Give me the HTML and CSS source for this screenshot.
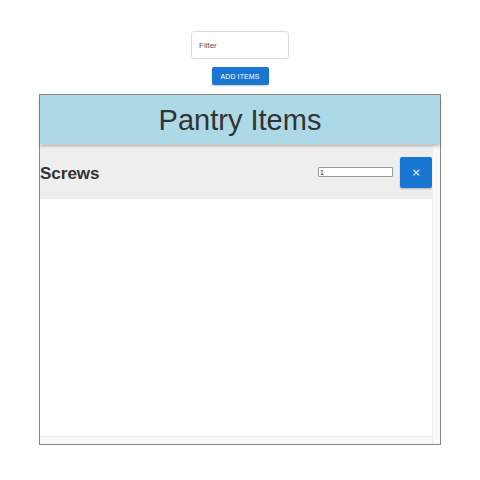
FILE: index.html
```html
<!DOCTYPE html>
<html lang="en">
<head>
  <meta charset="UTF-8">
  <title>Pantry</title>
  <link rel="stylesheet" href="styles.css">
</head>
<body>
  <div class="controls">
    <input class="filter" type="text" placeholder="Filter">
    <button class="add-btn">ADD ITEMS</button>
  </div>

  <div class="pantry">
    <header class="pantry-head">
      <h1>Pantry Items</h1>
    </header>
    <div class="scroller">
      <div class="list">
        <div class="item">
          <span class="item-name">Screws</span>
          <div class="item-actions">
            <input class="qty" type="text" value="1">
            <button class="remove">&times;</button>
          </div>
        </div>
      </div>
      <div class="track-v"></div>
      <div class="track-h"></div>
    </div>
  </div>
</body>
</html>
```

FILE: styles.css
```css
* {
  margin: 0;
  padding: 0;
  box-sizing: border-box;
}

body {
  font-family: "Liberation Sans", Arial, sans-serif;
  background: #fff;
  color: #333;
}

.controls {
  display: flex;
  flex-direction: column;
  align-items: center;
  padding-top: 31px;
  gap: 8px;
}

.filter {
  width: 98px;
  height: 28px;
  border: 1px solid #ddd;
  border-radius: 3px;
  padding: 0 7px;
  font-family: "Liberation Sans", Arial, sans-serif;
  font-size: 8px;
  color: #333;
  outline: none;
}
.filter::placeholder {
  color: #555;
}

.add-btn {
  width: 57px;
  height: 18px;
  border: none;
  border-radius: 2px;
  background: #1976d2;
  color: #fff;
  font-family: "Liberation Sans", Arial, sans-serif;
  font-size: 7px;
  letter-spacing: 0.1px;
  box-shadow: 0 1px 2px rgba(0, 0, 0, 0.2);
}

.pantry {
  width: 402px;
  height: 351px;
  margin: 9px 0 0 39px;
  border: 1px solid #888;
  display: flex;
  flex-direction: column;
}

.pantry-head {
  height: 49px;
  background: #add8e6;
  box-shadow: 0 2px 3px rgba(0, 0, 0, 0.25);
  position: relative;
  z-index: 1;
  display: flex;
  justify-content: center;
  align-items: center;
}

.pantry-head h1 {
  font-weight: normal;
  font-size: 29px;
  color: #333;
  margin-top: 1px;
}

.scroller {
  flex: 1;
  display: grid;
  grid-template-columns: 1fr 8px;
  grid-template-rows: 1fr 8px;
}

.list {
  padding-top: 1px;
  background: #fff;
}

.item {
  height: 54px;
  background: #eee;
  display: flex;
  justify-content: space-between;
  align-items: center;
}

.item-name {
  font-weight: bold;
  font-size: 17px;
  color: #333;
  margin-top: 3px;
}

.item-actions {
  display: flex;
  align-items: center;
  gap: 7px;
}

.qty {
  width: 75px;
  height: 10px;
  border: 1px solid #999;
  border-radius: 1px;
  padding: 0 1px;
  font-size: 7px;
  font-family: "Liberation Sans", Arial, sans-serif;
  color: #222;
  background: #fff;
}

.remove {
  width: 32px;
  height: 31px;
  border: none;
  border-radius: 2px;
  background: #1976d2;
  color: #fff;
  font-size: 11px;
  font-family: "DejaVu Sans", sans-serif;
  box-shadow: 0 1px 2px rgba(0, 0, 0, 0.25);
}

.track-v {
  grid-row: 1 / 3;
  grid-column: 2;
  background: #f9f9f9;
  border-left: 1px solid #eee;
}

.track-h {
  grid-row: 2;
  grid-column: 1;
  background: #f9f9f9;
  border-top: 1px solid #eee;
}
```
